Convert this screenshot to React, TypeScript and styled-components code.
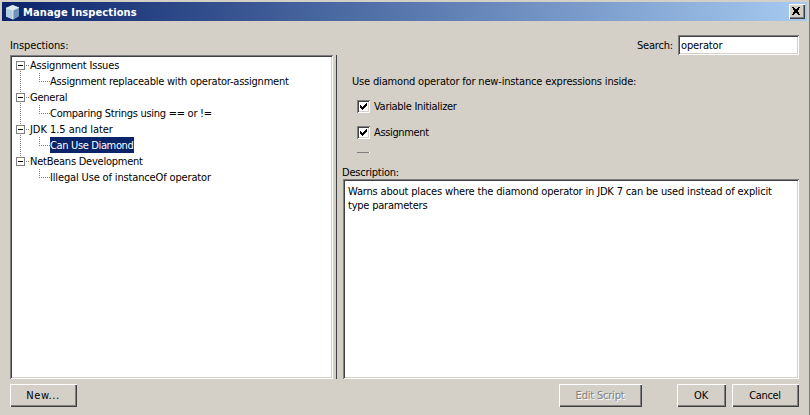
import React from "react";
import styled, { createGlobalStyle } from "styled-components";

const Global = createGlobalStyle`
  * { box-sizing: border-box; }
  body { margin: 0; overflow: hidden; }
`;

const FACE = "#d4d0c8";

const Dialog = styled.div`
  width: 810px;
  height: 415px;
  padding: 2px 2px 0;
  background: ${FACE};
  border-right: 1px solid #808080;
  font: 11px/16px "DejaVu Sans Condensed", "DejaVu Sans", sans-serif;
  color: #000;
  white-space: nowrap;
  overflow: hidden;
`;

const TitleBar = styled.header`
  display: flex;
  align-items: center;
  height: 19px;
  padding: 0 2px 0 3px;
  background: linear-gradient(90deg, #0a246a, #a6caf0);
  color: #fff;
`;

const Title = styled.h1`
  flex: 1;
  height: 19px;
  margin: 0 0 0 3px;
  padding-top: 2px;
  font-size: 11px;
  line-height: 18px;
`;

const Text = styled.span<{ $track?: number }>`
  letter-spacing: ${(p) => p.$track ?? -0.2}px;
`;

const Button = styled.button<{ $width: number }>`
  width: ${(p) => p.$width}px;
  height: 23px;
  padding: 1px 1px 0 0;
  border: 0;
  background: ${FACE};
  box-shadow: inset 1px 1px #fff, inset -1px -1px #404040, inset -2px -2px #808080;
  font: inherit;
  color: #000;
  &:disabled {
    color: #808080;
    text-shadow: 1px 1px #fff;
  }
`;

const CloseButton = styled.button`
  display: grid;
  place-items: center;
  width: 16px;
  height: 15px;
  padding: 0 2px 1px 0;
  border: 0;
  background: ${FACE};
  box-shadow: inset 1px 1px #fff, inset -1px -1px #404040, inset -2px -2px #808080;
`;

const TopRow = styled.div`
  display: flex;
  justify-content: space-between;
  height: 34px;
  padding: 14px 8px 0;
`;

const ListLabel = styled.label`
  padding-top: 3px;
`;

const SearchLabel = styled.label`
  display: flex;
  gap: 5px;
  height: 20px;
  line-height: 22px;
`;

const Sunken = styled.div`
  background: #fff;
  box-shadow: inset 1px 1px #808080, inset -1px -1px #fff, inset 2px 2px #404040,
    inset -2px -2px ${FACE};
`;

const SearchInput = styled(Sunken)`
  width: 121px;
  height: 20px;
  padding: 0 3px;
`;

const Main = styled.main`
  display: flex;
  height: 324px;
  padding: 0 8px;
`;

const Tree = styled(Sunken)`
  width: 323px;
  padding: 2px 6px;
`;

const Divider = styled.div`
  width: 1px;
  margin: 0 6px 0 3px;
  background: #404040;
`;

const TreeRow = styled.div`
  display: flex;
  height: 16px;
`;

const NodeText = styled(Text)<{ $selected?: boolean }>`
  height: 16px;
  line-height: 18px;
  ${(p) => p.$selected && "background: #0a246a; color: #fff; width: 84px;"}
`;

const Details = styled.section`
  display: flex;
  flex-direction: column;
  width: 456px;
`;

const Options = styled.div`
  height: 109px;
  padding: 19px 0 0 9px;
`;

const OptionRow = styled.div`
  display: flex;
  align-items: center;
  gap: 4px;
  height: 13px;
  margin: 0 0 13px 5px;
  line-height: 13px;
`;

const Hint = styled.div`
  height: 16px;
  margin-bottom: 10px;
`;

const Box = styled(Sunken)`
  display: grid;
  place-items: center;
  width: 13px;
  height: 13px;
`;

const ClippedBox = styled.div`
  width: 13px;
  height: 1px;
  margin-left: 5px;
  background: #808080;
  border-right: 1px solid #fff;
`;

const DescriptionLabel = styled.label`
  height: 15px;
  margin: 0 0 0 -1px;
  line-height: 18px;
`;

const Description = styled(Sunken)`
  flex: 1;
  padding: 6px 5px;
  line-height: 14px;
`;

const Footer = styled.footer`
  display: flex;
  padding: 5px 8px 0;
`;

const Spacer = styled.div<{ $width?: number }>`
  ${(p) => (p.$width ? `width: ${p.$width}px` : "flex: 1")};
`;

const CubeIcon = () => (
  <svg width="15" height="16" viewBox="0 0 15 16">
    <path d="M7.5 1 14 3.5V12L8 15.5 1 12.5V4Z" fill="#b7cfe0" />
    <path d="M7.5 1 14 3.5 8 6.2 1 4Z" fill="#dce9ee" />
    <path d="M1 4 8 6.2V15.5L1 12.5Z" fill="#b4cede" />
    <path d="M8 6.2 14 3.5V12L8 15.5Z" fill="#6d93bb" />
    <path d="M1 4 8 6.2 14 3.5M8 6.2V15" fill="none" stroke="#eef5f8" strokeWidth=".7" />
  </svg>
);

const CloseIcon = () => (
  <svg width="8" height="8" shapeRendering="crispEdges">
    <path d="M0 0H2V1H3V2H5V1H6V0H8V1H7V2H6V3H5V5H6V6H7V7H8V8H6V7H5V6H3V7H2V8H0V7H1V6H2V5H3V3H2V2H1V1H0Z" fill="#000" />
    <path d="M1 1H3V3H1ZM5 1H7V3H5ZM1 5H3V7H1ZM5 5H7V7H5ZM2 3H6V5H2Z" fill="#000" />
  </svg>
);

const CheckIcon = () => (
  <svg width="7" height="7" shapeRendering="crispEdges">
    <path d="M0 2H1V3H2V4H3V3H4V2H5V1H6V0H7V3H6V4H5V5H4V6H3V7H2V6H1V5H0Z" fill="#000" />
  </svg>
);

const dots = { stroke: "#808080", strokeDasharray: "1 1" };

/* Expander box with its connector lines to the neighbouring groups. */
const GroupLines = ({ first, last }: { first?: boolean; last?: boolean }) => (
  <svg width="14" height="16" shapeRendering="crispEdges">
    {!first && <path d="M4.5 0V4" {...dots} />}
    {!last && <path d="M4.5 14V16" {...dots} />}
    <rect x=".5" y="4.5" width="8" height="8" fill="#fff" stroke="#808080" />
    <path d="M2 8.5H7" stroke="#000" />
    <path d="M10 8.5H14" {...dots} />
  </svg>
);

const LeafLines = ({ last }: { last?: boolean }) => (
  <svg width="34" height="16" shapeRendering="crispEdges">
    {!last && <path d="M4.5 0V16" {...dots} />}
    <path d="M23.5 0V8M23 8.5H34" fill="none" {...dots} />
  </svg>
);

const groups = [
  { name: "Assignment Issues", track: -0.18, leaf: "Assignment replaceable with operator-assignment", leafTrack: -0.23 },
  { name: "General", track: -0.25, leaf: "Comparing Strings using == or !=", leafTrack: -0.27 },
  { name: "JDK 1.5 and later", track: -0.05, leaf: "Can Use Diamond", leafTrack: -0.35, selected: true },
  { name: "NetBeans Development", track: -0.24, leaf: "Illegal Use of instanceOf operator", leafTrack: -0.15 },
];

export default function App() {
  return (
    <Dialog>
      <Global />
      <TitleBar>
        <CubeIcon />
        <Title><Text $track={0.12}>Manage Inspections</Text></Title>
        <CloseButton aria-label="Close"><CloseIcon /></CloseButton>
      </TitleBar>
      <TopRow>
        <ListLabel><Text $track={-0.1}>Inspections:</Text></ListLabel>
        <SearchLabel>
          <Text $track={-0.17}>Search:</Text>
          <SearchInput><Text $track={-0.15}>operator</Text></SearchInput>
        </SearchLabel>
      </TopRow>
      <Main>
        <Tree>
          {groups.map((g, i) => (
            <React.Fragment key={g.name}>
              <TreeRow>
                <GroupLines first={i === 0} last={i === 3} />
                <NodeText $track={g.track}>{g.name}</NodeText>
              </TreeRow>
              <TreeRow>
                <LeafLines last={i === 3} />
                <NodeText $track={g.leafTrack} $selected={g.selected}>{g.leaf}</NodeText>
              </TreeRow>
            </React.Fragment>
          ))}
        </Tree>
        <Divider />
        <Details>
          <Options>
            <Hint><Text $track={-0.17}>Use diamond operator for new-instance expressions inside:</Text></Hint>
            <OptionRow><Box><CheckIcon /></Box><Text $track={-0.3}>Variable Initializer</Text></OptionRow>
            <OptionRow><Box><CheckIcon /></Box><Text $track={-0.36}>Assignment</Text></OptionRow>
            <ClippedBox />
          </Options>
          <DescriptionLabel><Text $track={-0.23}>Description:</Text></DescriptionLabel>
          <Description>
            <Text $track={-0.17}>Warns about places where the diamond operator in JDK 7 can be used instead of explicit</Text>
            <br />
            <Text $track={-0.22}>type parameters</Text>
          </Description>
        </Details>
      </Main>
      <Footer>
        <Button $width={67}><Text $track={0.55}>New...</Text></Button>
        <Spacer />
        <Button $width={83} disabled><Text>Edit Script</Text></Button>
        <Spacer $width={35} />
        <Button $width={49}><Text $track={-0.1}>OK</Text></Button>
        <Spacer $width={6} />
        <Button $width={67}><Text $track={-0.33}>Cancel</Text></Button>
      </Footer>
    </Dialog>
  );
}
